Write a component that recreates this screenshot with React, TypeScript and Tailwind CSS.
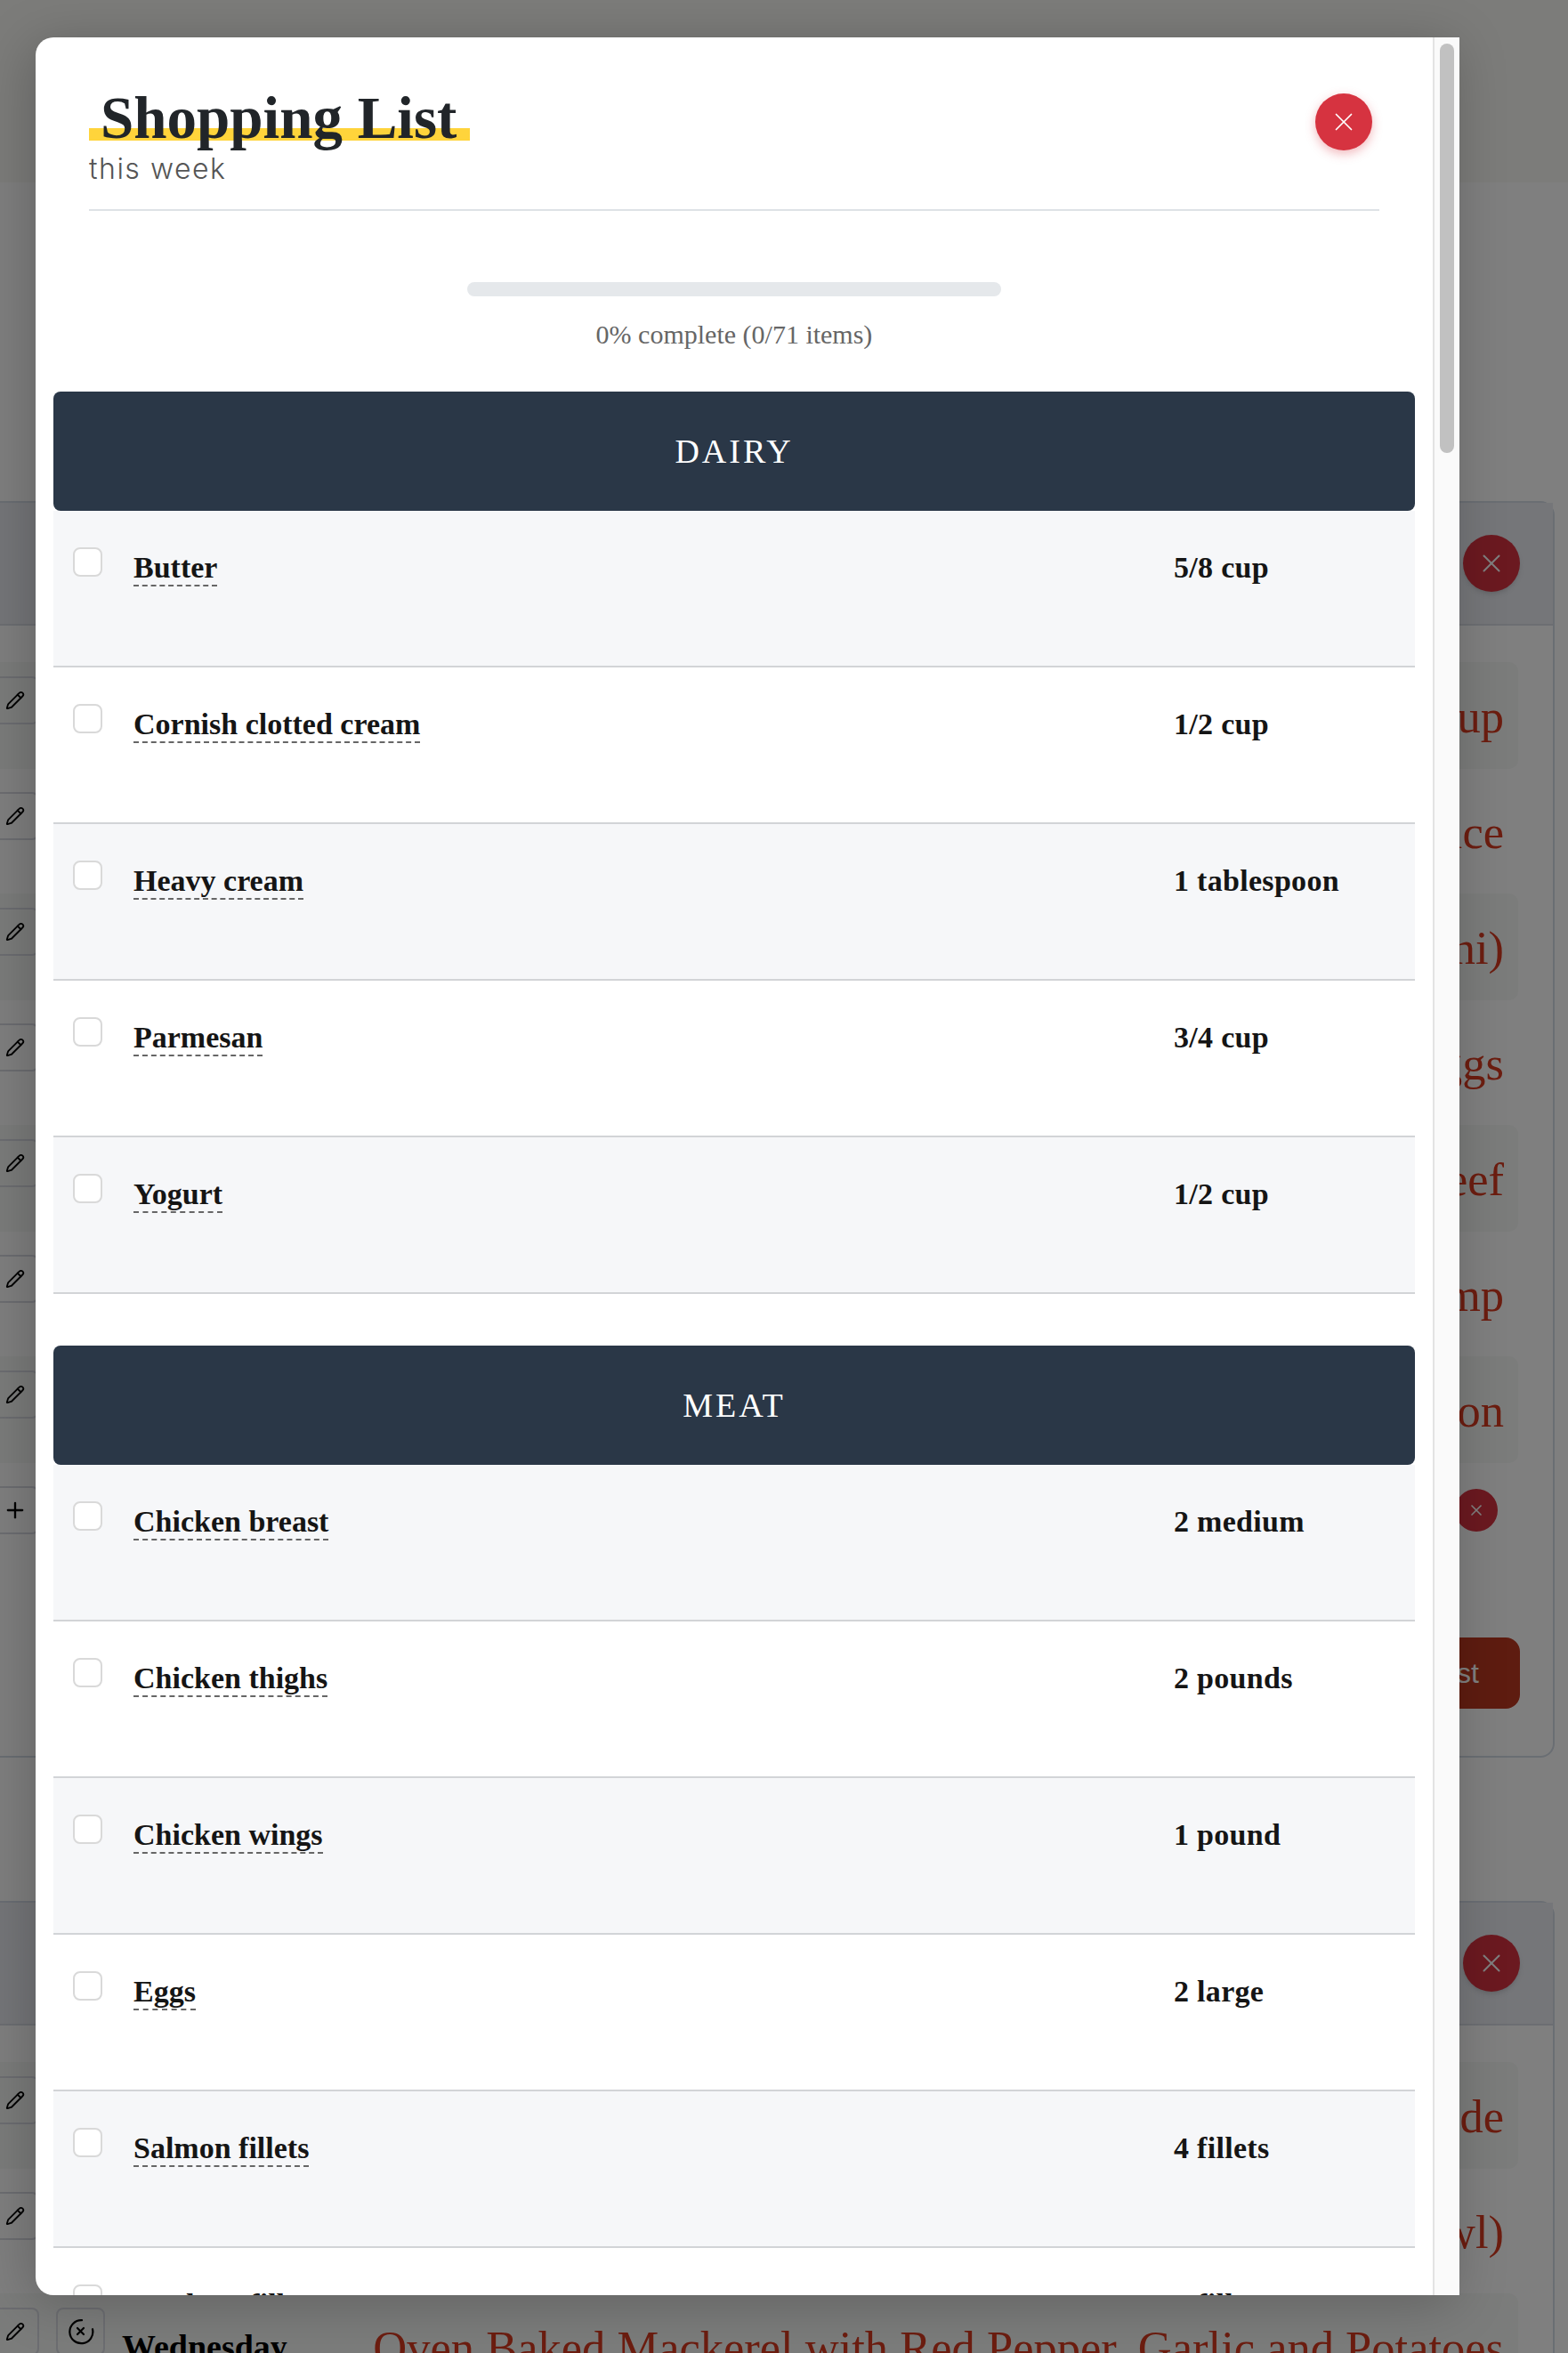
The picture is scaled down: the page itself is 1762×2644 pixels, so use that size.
import { Pencil, Plus, X } from "lucide-react";

const serif = "font-['Liberation_Serif',serif]";

const weekOne = [
  { day: "Monday", recipe: "Chicken Soup" },
  { day: "Tuesday", recipe: "Fried Rice" },
  { day: "Wednesday", recipe: "Pasta (Zucchini)" },
  { day: "Thursday", recipe: "Scrambled Eggs" },
  { day: "Friday", recipe: "Roast Beef" },
  { day: "Saturday", recipe: "Garlic Shrimp" },
  { day: "Sunday", recipe: "Baked Salmon" },
];

const weekTwo = [
  { day: "Monday", recipe: "Marinated Chicken Roulade" },
  { day: "Tuesday", recipe: "Chicken Rice Bowl)" },
  { day: "Wednesday", recipe: "Oven Baked Mackerel with Red Pepper, Garlic and Potatoes" },
];

const sections = [
  {
    title: "DAIRY",
    items: [
      ["Butter", "5/8 cup"],
      ["Cornish clotted cream", "1/2 cup"],
      ["Heavy cream", "1 tablespoon"],
      ["Parmesan", "3/4 cup"],
      ["Yogurt", "1/2 cup"],
    ],
  },
  {
    title: "MEAT",
    items: [
      ["Chicken breast", "2 medium"],
      ["Chicken thighs", "2 pounds"],
      ["Chicken wings", "1 pound"],
      ["Eggs", "2 large"],
      ["Salmon fillets", "4 fillets"],
      ["Sea bass fillets", "2 fillets"],
    ],
  },
];

function RemoveIcon() {
  return (
    <svg width="30" height="30" viewBox="0 0 30 30" fill="none" stroke="currentColor" strokeWidth="2.2" strokeLinecap="round">
      <path d="M16 2.2a13 13 0 1 0 12 10" />
      <path d="M11 11l7 7M18 11l-7 7" />
    </svg>
  );
}

function PlanRow({ day, recipe, shaded }: { day: string; recipe: string; shaded: boolean }) {
  return (
    <div className={`flex h-[120px] mb-[10px] rounded-[10px] ${shaded ? "bg-[#f6f8f6]" : ""}`}>
      <div className="mt-[16px] flex h-[54px] w-[54px] shrink-0 items-center justify-center rounded-[8px] border-2 border-[#d8dbe2] text-black">
        <Pencil size={22} strokeWidth={2} />
      </div>
      <div className="ml-[19px] mt-[16px] flex h-[54px] w-[55px] shrink-0 items-center justify-center rounded-[8px] border-2 border-[#d8dbe2] text-black">
        <RemoveIcon />
      </div>
      <div className={`ml-[19px] self-center text-[38px] font-bold whitespace-nowrap text-black ${serif}`}>{day}</div>
      <div className={`flex-1 self-center pr-[16px] pt-[2px] text-right text-[52.5px] leading-[60px] whitespace-nowrap text-[#d93a20] ${serif}`}>
        {recipe}
      </div>
    </div>
  );
}

function PlanCardHeader() {
  return (
    <div className="flex h-[138px] items-center justify-end border-b-2 border-[#d8dde4] bg-[#eaecf2] pr-[37px]">
      <button className="flex h-[64px] w-[64px] items-center justify-center rounded-full bg-[#d63340] text-white shadow-md">
        <X size={34} strokeWidth={1.4} />
      </button>
    </div>
  );
}

function Background() {
  return (
    <div className="flex flex-col">
      <div className="h-[205px] bg-[#f9f9f5]" />
      <div className="ml-[-20px] mt-[358px] h-[1412px] w-[1767px] rounded-[16px] border-2 border-[#d4dce6]">
        <PlanCardHeader />
        <div className="pl-[8px] pr-[39px] pt-[41px]">
          {weekOne.map((row, i) => (
            <PlanRow key={row.day} day={row.day} recipe={row.recipe} shaded={i % 2 === 0} />
          ))}
          <div className="flex items-center justify-between pr-[23px] pt-[16px]">
            <div className="flex h-[54px] w-[54px] items-center justify-center rounded-[8px] border-2 border-[#d8dbe2] text-black">
              <Plus size={28} strokeWidth={2} />
            </div>
            <button className="flex h-[48px] w-[48px] items-center justify-center rounded-full bg-[#d63340] text-white">
              <X size={20} strokeWidth={2} />
            </button>
          </div>
          <div className="-mr-[2px] mt-[116px] flex justify-end">
            <button className="h-[80px] rounded-[16px] bg-[#bc3820] px-[46px] font-['Liberation_Sans',sans-serif] text-[32px] whitespace-nowrap text-white">
              Add to Shopping List
            </button>
          </div>
        </div>
      </div>
      <div className="ml-[-20px] mt-[161px] w-[1767px] rounded-[16px] border-2 border-[#d4dce6]">
        <PlanCardHeader />
        <div className="pl-[8px] pr-[39px] pt-[41px]">
          {weekTwo.map((row, i) => (
            <PlanRow key={row.recipe} day={row.day} recipe={row.recipe} shaded={i % 2 === 0} />
          ))}
        </div>
      </div>
    </div>
  );
}

function ItemRow({ name, amount, shaded }: { name: string; amount: string; shaded: boolean }) {
  return (
    <div className={`flex h-[176px] shrink-0 border-b-2 border-[#d2d4d7] pl-[22px] pt-[41px] ${shaded ? "bg-[#f6f7f9]" : "bg-white"}`}>
      <div className="h-[33px] w-[33px] shrink-0 rounded-[8px] border-2 border-[#d9d9d9] bg-white" />
      <div className={`ml-[35px] w-[1169px] pt-[3px] text-[34px] leading-[40px] font-bold text-[#151515] ${serif}`}>
        <span className="inline-block border-b-2 border-dashed border-[#666] leading-[38px]">{name}</span>
      </div>
      <div className={`pt-[3px] text-[34px] leading-[40px] font-bold tracking-[0.3px] text-[#151515] ${serif}`}>{amount}</div>
    </div>
  );
}

export default function App() {
  return (
    <div className="relative h-[2644px] w-[1762px] overflow-hidden bg-white">
      <Background />
      <div className="absolute inset-0 bg-black/50 pl-[40px] pt-[42px]">
        <div className="flex h-[2537px] w-[1600px] rounded-l-[20px] bg-white shadow-[-6px_8px_60px_rgba(0,0,0,0.22)]">
          <div className="flex-1 overflow-hidden rounded-l-[20px] px-[20px]">
            <div className="mx-[40px] flex h-[195px] items-start justify-between border-b-2 border-[#dee2e6]">
              <div className="pt-[53px]">
                <h1 className={`h-[74px] w-[428px] bg-[linear-gradient(transparent_66%,#ffd43b_66%,#ffd43b_85%,transparent_85%)] pl-[13px] text-[67px] leading-[74px] font-bold text-[#212529] ${serif}`}>
                  Shopping List
                </h1>
                <p className="mt-[2px] font-['Inter',sans-serif] text-[32px] leading-[38px] font-light tracking-[1.5px] text-[#555]">this week</p>
              </div>
              <button className="mr-[8px] mt-[63px] flex h-[64px] w-[64px] items-center justify-center rounded-full bg-[#d63340] text-white shadow-[0_4px_12px_rgba(214,51,64,0.35)]">
                <X size={34} strokeWidth={1.2} />
              </button>
            </div>
            <div className="flex flex-col items-center pt-[80px]">
              <div className="h-[16px] w-[600px] rounded-[8px] bg-[#e5e8eb]" />
              <p className={`mt-[25px] text-[30px] leading-[36px] text-[#666] ${serif}`}>0% complete (0/71 items)</p>
            </div>
            <div className="mt-[46px]">
              {sections.map((section) => (
                <div key={section.title} className="mb-[58px] flex flex-col">
                  <div className={`flex h-[134px] items-center justify-center rounded-[8px] bg-[#2a3747] text-[38px] tracking-[3px] text-white ${serif}`}>
                    {section.title}
                  </div>
                  {section.items.map(([name, amount], i) => (
                    <ItemRow key={name} name={name} amount={amount} shaded={i % 2 === 0} />
                  ))}
                </div>
              ))}
            </div>
          </div>
          <div className="w-[30px] shrink-0 border-l-2 border-[#e3e3e3] bg-[#fafafa] pl-[6px] pt-[7px]">
            <div className="h-[460px] w-[16px] rounded-full bg-[#c1c1c1]" />
          </div>
        </div>
      </div>
    </div>
  );
}
